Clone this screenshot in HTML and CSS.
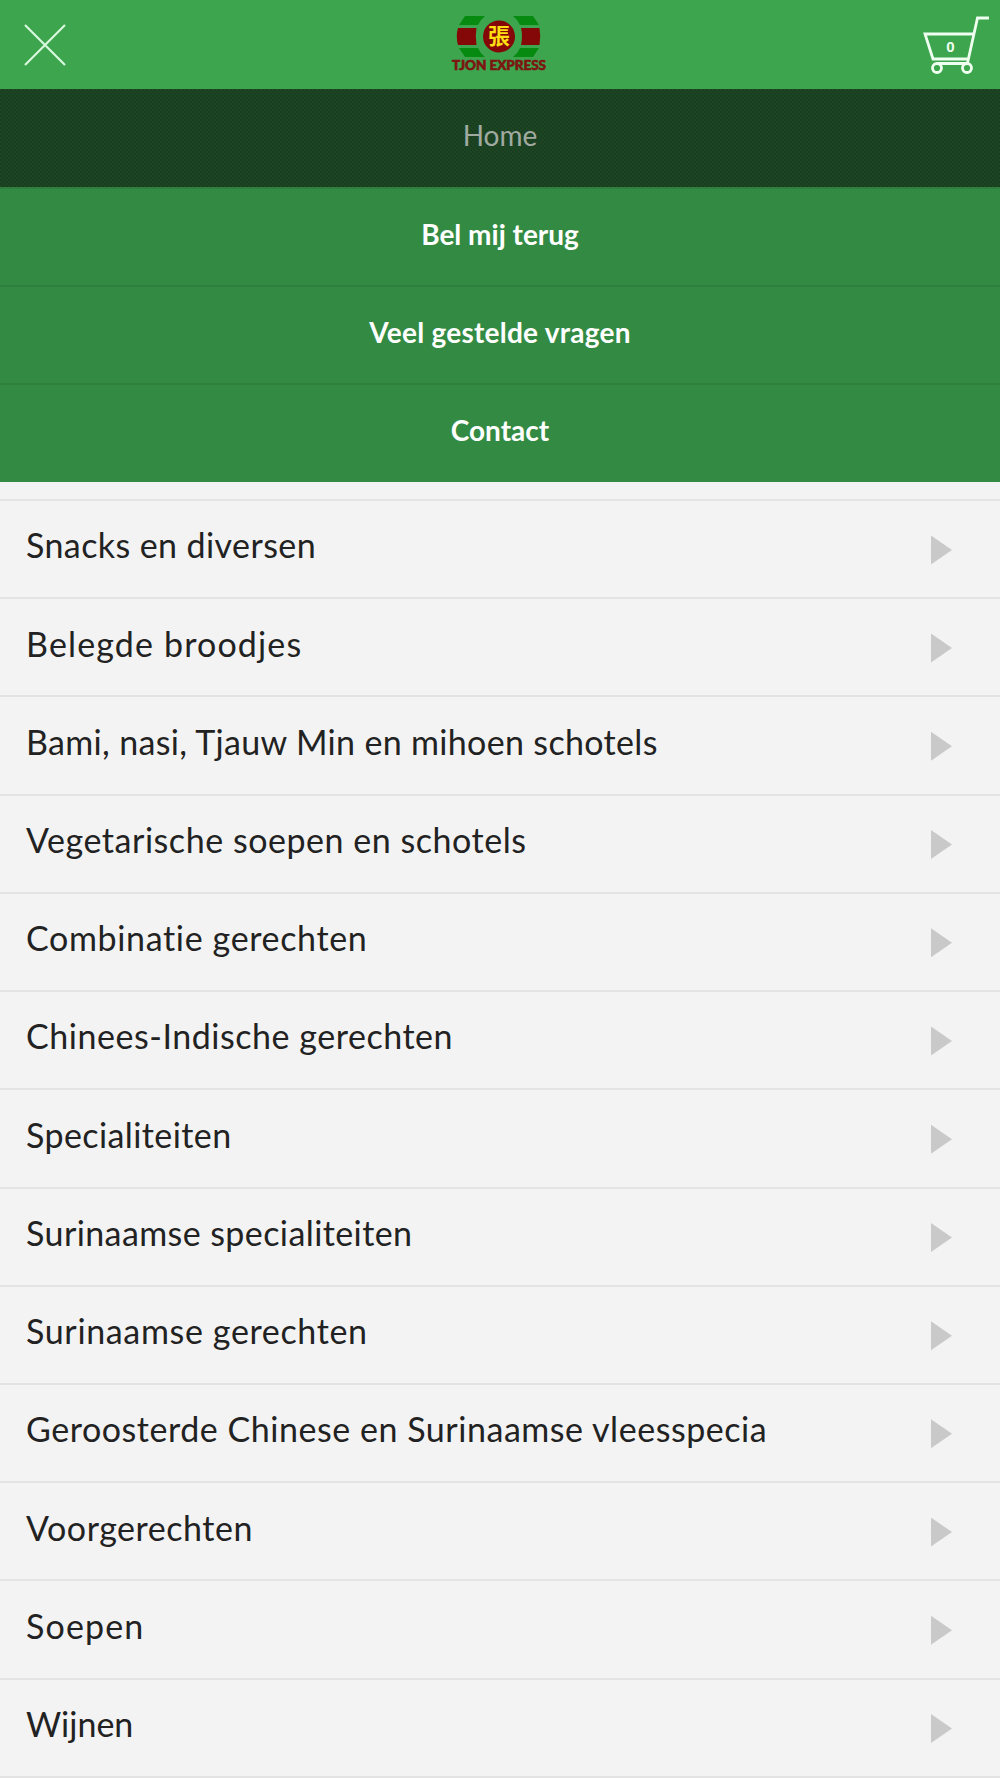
FILE: index.html
```html
<!DOCTYPE html>
<html lang="nl">
<head>
	<meta charset="utf-8">
	<title>Tjon Express</title>
	<link rel="stylesheet" href="styles.css">
</head>
<body>
	<header class="topbar">
		<svg class="close" viewBox="0 0 42 42"><path d="M1 1L41 41M41 1L1 41"/></svg>
		<svg class="logo" viewBox="0 0 100 60">
			<g fill="#078a10">
				<path d="M16 1H36Q31 5 29 10H10Z"/>
				<path d="M64 1H84L90 10H71Q69 5 64 1Z"/>
				<path d="M10 33H29Q31 38 36 42H16Z"/>
				<path d="M71 33H90L84 42H64Q69 38 71 33Z"/>
			</g>
			<g fill="#850808">
				<path d="M9 13H27.500Q26 21 27.500 30H9Q6.500 21 9 13Z"/>
				<path d="M72 13H90.500Q92 21 90.500 30H72Q74 21 72 13Z"/>
				<circle cx="50" cy="21.500" r="16"/>
			</g>
			<text class="logo-sign" x="50" y="29" text-anchor="middle">張</text>
			<text class="logo-name" x="3" y="54.800" textLength="94" lengthAdjust="spacingAndGlyphs">TJON EXPRESS</text>
		</svg>
		<svg class="cart" viewBox="0 0 70 60">
			<path d="M66 3H54.500L44.500 48M50 19H2L10 44H45M14 48.500H44"/>
			<circle cx="14" cy="53" r="4.500"/>
			<circle cx="44" cy="53" r="4.500"/>
			<text x="27.500" y="37" text-anchor="middle">0</text>
		</svg>
	</header>
	<nav class="menu">
		<a class="menu-item active">Home</a>
		<a class="menu-item">Bel mij terug</a>
		<a class="menu-item wide">Veel gestelde vragen</a>
		<a class="menu-item">Contact</a>
	</nav>
	<ul class="list">
		<li class="row tight"><span>Snacks en diversen</span><i class="arrow"></i></li>
		<li class="row loose"><span>Belegde broodjes</span><i class="arrow"></i></li>
		<li class="row tighter"><span>Bami, nasi, Tjauw Min en mihoen schotels</span><i class="arrow"></i></li>
		<li class="row"><span>Vegetarische soepen en schotels</span><i class="arrow"></i></li>
		<li class="row open"><span>Combinatie gerechten</span><i class="arrow"></i></li>
		<li class="row"><span>Chinees-Indische gerechten</span><i class="arrow"></i></li>
		<li class="row tight"><span>Specialiteiten</span><i class="arrow"></i></li>
		<li class="row tight"><span>Surinaamse specialiteiten</span><i class="arrow"></i></li>
		<li class="row open"><span>Surinaamse gerechten</span><i class="arrow"></i></li>
		<li class="row"><span>Geroosterde Chinese en Surinaamse vleesspecia</span><i class="arrow"></i></li>
		<li class="row"><span>Voorgerechten</span><i class="arrow"></i></li>
		<li class="row loose"><span>Soepen</span><i class="arrow"></i></li>
		<li class="row flat"><span>Wijnen</span><i class="arrow"></i></li>
	</ul>
</body>
</html>
```
FILE: styles.css
```css
* { box-sizing: border-box; }
body { margin: 0; height: 1778px; overflow: hidden; background: #f3f3f3; color: #222; font-family: Lato, sans-serif; }

.topbar { display: flex; justify-content: space-between; height: 88.500px; padding: 0 7px 0 24px; background: #3da54e; }
.close { width: 42px; height: 42px; margin-top: 24px; }
.close path { fill: none; stroke: #d9f8dc; stroke-width: 2.200; }
.logo { width: 100px; height: 60px; margin-top: 15px; margin-left: 9px; overflow: visible; }
.logo-sign { fill: #ffdf12; font: bold 22px "Noto Sans CJK TC", sans-serif; }
.logo-name { fill: #7c1512; font: 900 12.500px Lato, sans-serif; stroke: #7c1512; stroke-width: .6; }
.cart { width: 70px; height: 60px; margin-top: 15px; overflow: visible; fill: none; stroke: #effff0; stroke-width: 2.800; }
.cart text { fill: #effff0; stroke: none; font: bold 15px "Liberation Sans", sans-serif; }

.menu { background: #338b43; }
.menu-item { display: flex; justify-content: center; height: 98.250px; padding-top: 27px; border-top: 2px solid #2f803e; color: #fff; font-size: 28px; line-height: 36px; font-weight: bold; }
.wide { letter-spacing: .25px; }
.active { padding-top: 28px; border-top: 0; background: repeating-conic-gradient(#193d1e 0 25%, #1c4724 0 50%) 0 0 / 4px 4px; color: #a0aaa1; font-weight: normal; }

.list { margin: 0; padding: 17.500px 0 0; border-bottom: 2px solid #e3e3e3; list-style: none; }
.row { display: flex; justify-content: space-between; height: 98.230px; padding: 23.400px 48px 0 26px; border-top: 2px solid #e3e3e3; font-size: 34px; line-height: 41px; letter-spacing: .54px; white-space: nowrap; }
.tight { letter-spacing: .41px; }
.tighter { letter-spacing: .33px; }
.open { letter-spacing: .65px; }
.loose { letter-spacing: 1.150px; }
.flat { letter-spacing: 0; }
.arrow { width: 21px; height: 29px; margin-top: 11px; background: #c9c9c9; clip-path: polygon(0 0, 100% 50%, 0 100%); }
```
